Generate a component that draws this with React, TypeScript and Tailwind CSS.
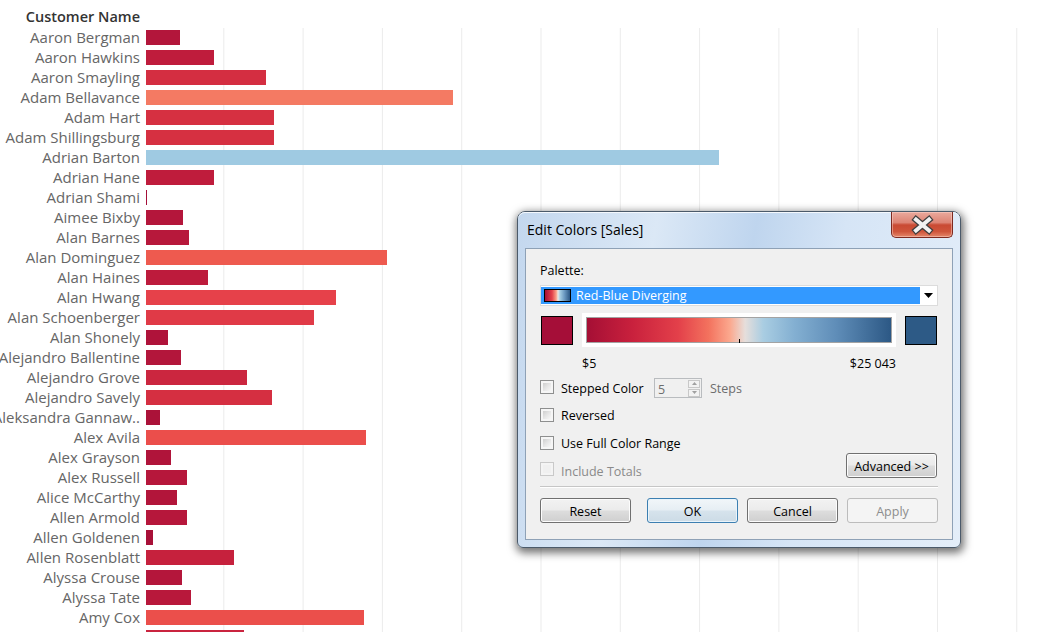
import React from "react";

type Row = [string, number, string];

const rows: Row[] = [
  ["Aaron Bergman", 34, "#b3163b"],
  ["Aaron Hawkins", 68, "#bf1c3c"],
  ["Aaron Smayling", 120, "#d42e41"],
  ["Adam Bellavance", 307, "#f47a63"],
  ["Adam Hart", 128, "#d63041"],
  ["Adam Shillingsburg", 128, "#d63041"],
  ["Adrian Barton", 573, "#9fcae2"],
  ["Adrian Hane", 68, "#bf1c3c"],
  ["Adrian Shami", 1, "#a50f38"],
  ["Aimee Bixby", 37, "#b4163b"],
  ["Alan Barnes", 43, "#b7183b"],
  ["Alan Dominguez", 241, "#ee5a4f"],
  ["Alan Haines", 62, "#bd1b3c"],
  ["Alan Hwang", 190, "#e6414a"],
  ["Alan Schoenberger", 168, "#e03a47"],
  ["Alan Shonely", 22, "#af133a"],
  ["Alejandro Ballentine", 35, "#b3163b"],
  ["Alejandro Grove", 101, "#cb263f"],
  ["Alejandro Savely", 126, "#d52f41"],
  ["Aleksandra Gannaw..", 14, "#ab1239"],
  ["Alex Avila", 220, "#eb4e4b"],
  ["Alex Grayson", 25, "#b0143a"],
  ["Alex Russell", 41, "#b6173b"],
  ["Alice McCarthy", 31, "#b2153a"],
  ["Allen Armold", 41, "#b6173b"],
  ["Allen Goldenen", 7, "#a81038"],
  ["Allen Rosenblatt", 88, "#c6213d"],
  ["Alyssa Crouse", 36, "#b4163b"],
  ["Alyssa Tate", 45, "#b8183b"],
  ["Amy Cox", 218, "#eb4f4b"],
  ["", 98, "#ca243f"],
];

function Checkbox({ disabled }: { disabled?: boolean }) {
  return (
    <div
      className={
        disabled
          ? "w-[14px] h-[14px] shrink-0 border border-[#c9c9c9] bg-[#f4f4f4] p-[2px]"
          : "w-[14px] h-[14px] shrink-0 border border-[#8e8f8f] bg-[#f6f6f6] p-[2px]"
      }
    >
      <div
        className={
          disabled
            ? "w-full h-full bg-[#f0f0f0]"
            : "w-full h-full bg-[linear-gradient(135deg,#cfcfcf_0%,#e6e6e6_50%,#f8f8f8_100%)]"
        }
      />
    </div>
  );
}

function WinButton({
  children,
  variant = "normal",
  className = "",
}: {
  children: React.ReactNode;
  variant?: "normal" | "default" | "disabled";
  className?: string;
}) {
  const base =
    "h-[25px] w-[91px] shrink-0 rounded-[3px] border flex items-center justify-center pt-[3px] text-[12.5px] leading-none";
  const v =
    variant === "default"
      ? "border-[#3c7fb1] text-black bg-[linear-gradient(to_bottom,#f1f6f9_0%,#e6eef4_48%,#d6e3ec_52%,#ccdbe6_100%)] shadow-[inset_0_0_0_1px_#e9f4fb]"
      : variant === "disabled"
      ? "border-[#bcbcbc] text-[#8d8d8d] bg-[#f4f4f4]"
      : "border-[#707070] text-black bg-[linear-gradient(to_bottom,#f2f2f2_0%,#ebebeb_48%,#dddddd_52%,#cfcfcf_100%)] shadow-[inset_0_0_0_1px_#fcfcfc]";
  return <div className={`${base} ${v} ${className}`}>{children}</div>;
}

function Dialog() {
  return (
    <div className="absolute left-[517px] top-[211px] w-[444px] h-[337px] rounded-t-[8px] rounded-b-[6px] border border-[#4b5a6a] bg-[linear-gradient(100deg,#c3d7ee_0%,#dbe8f6_28%,#bfd5ee_48%,#d6e5f6_66%,#e4eef9_100%)] shadow-[1px_3px_9px_2px_rgba(0,0,0,0.55)] flex flex-col font-['Open_Sans','Noto_Sans',sans-serif]">
      <div className="h-[36px] flex shrink-0 rounded-t-[7px] shadow-[inset_0_1px_0_#f4f8fd]">
        <div className="flex-1 flex items-center pl-[9px] pb-[2px] text-[14px] text-black">
          Edit Colors [Sales]
        </div>
        <div className="mr-[7px] w-[62px] h-[26px] rounded-b-[5px] border border-t-0 border-[#7d2a20] bg-[linear-gradient(to_bottom,#eaa99d_0%,#dd8474_42%,#c94a33_52%,#cf553b_78%,#e4876a_100%)] shadow-[inset_0_0_0_1px_rgba(255,220,210,0.45)]">
          <svg width="62" height="26" viewBox="0 0 62 26">
            <path d="M24 7.5 L37 18.5 M37 7.5 L24 18.5" stroke="#3f3f3f" strokeWidth="6.5" strokeLinecap="square" fill="none" />
            <path d="M24 7.5 L37 18.5 M37 7.5 L24 18.5" stroke="#f2f2f2" strokeWidth="4" strokeLinecap="square" fill="none" />
          </svg>
        </div>
      </div>
      <div className="flex-1 mx-[7px] mb-[7px] border border-[#8ea1b6] bg-[#f0f0f0] px-[14px] flex flex-col text-[12.5px] text-black">
        <div className="mt-[14px] h-[16px] leading-[16px]">Palette:</div>
        <div className="mt-[6px] h-[21px] border border-[#dcdcdc] bg-white py-[1px] flex">
          <div className="flex-1 bg-[#3399ff] flex items-center">
            <div className="ml-[3px] w-[27px] h-[13px] border border-black bg-[linear-gradient(to_right,#a50f35_0%,#e3404a_28%,#fba088_45%,#ece6e2_52%,#a5cde3_60%,#6a98c0_78%,#2b5784_100%)]" />
            <div className="ml-[5px] pt-[1px] text-white leading-none">Red-Blue Diverging</div>
          </div>
          <div className="w-[17px] flex items-center justify-center">
            <svg width="9" height="5" viewBox="0 0 9 5">
              <path d="M0 0 H9 L4.5 5 Z" fill="#000" />
            </svg>
          </div>
        </div>
        <div className="mt-[7px] h-[34px] flex">
          <div className="ml-[1px] mt-[3px] w-[32px] h-[29px] border border-black bg-[#a50e38]" />
          <div className="ml-[9px] w-[314px] h-[34px] bg-white p-[4px]">
            <div className="relative w-full h-full border border-[#a3a3a3] bg-[linear-gradient(to_right,#a50f35_0%,#c9213d_15%,#e3404a_30%,#f3725e_40%,#fba88e_47%,#e6dedb_52%,#a9cde2_58%,#84b0d2_68%,#5f8db8_82%,#2c5885_100%)]">
              <div className="absolute left-1/2 bottom-[-1px] w-px h-[4px] bg-black" />
            </div>
          </div>
          <div className="ml-[9px] mt-[3px] w-[32px] h-[29px] border border-black bg-[#2d5a86]" />
        </div>
        <div className="mt-[9px] h-[16px] pl-[42px] leading-[16px]">
          <div className="w-[314px] flex justify-between">
            <span>$5</span>
            <span>$25 043</span>
          </div>
        </div>
        <div className="mt-[6px] h-[20px] flex items-start">
          <div className="mt-[2px]">
            <Checkbox />
          </div>
          <div className="ml-[7px] mt-[3px] w-[93px] leading-[16px]">Stepped Color</div>
          <div className="w-[48px] h-[20px] border border-[#b9bcbf] bg-[#f0f0f0] flex items-center">
            <div className="flex-1 pl-[3px] pt-[3px] leading-[16px] text-[#6d6d6d]">5</div>
            <div className="w-[12px] h-[17px] mr-[1px] flex flex-col gap-[1px]">
              <div className="flex-1 border border-[#c8c8c8] bg-[#f2f2f2] flex items-center justify-center">
                <svg width="5" height="3" viewBox="0 0 5 3"><path d="M0 3 L2.5 0 L5 3 Z" fill="#a0a0a0" /></svg>
              </div>
              <div className="flex-1 border border-[#c8c8c8] bg-[#f2f2f2] flex items-center justify-center">
                <svg width="5" height="3" viewBox="0 0 5 3"><path d="M0 0 L2.5 3 L5 0 Z" fill="#a0a0a0" /></svg>
              </div>
            </div>
          </div>
          <div className="ml-[8px] mt-[3px] leading-[16px] text-[#6d6d6d]">Steps</div>
        </div>
        <div className="mt-[7px] h-[20px] flex items-start">
          <div className="mt-[3px]">
            <Checkbox />
          </div>
          <div className="ml-[7px] mt-[3px] leading-[16px]">Reversed</div>
        </div>
        <div className="mt-[8px] h-[20px] flex items-start">
          <div className="mt-[3px]">
            <Checkbox />
          </div>
          <div className="ml-[7px] mt-[3px] leading-[16px]">Use Full Color Range</div>
        </div>
        <div className="h-[25px] flex items-start justify-between">
          <div className="mt-[9px] flex items-start">
            <Checkbox disabled />
            <div className="ml-[7px] mt-[2px] text-[#8a8a8a] leading-[16px]">Include Totals</div>
          </div>
          <WinButton className="w-[90px] mr-[1px]">Advanced &gt;&gt;</WinButton>
        </div>
        <div className="mt-[8px] h-px bg-[#c6c6c6] shadow-[0_1px_0_#ffffff]" />
        <div className="mt-[11px] flex">
          <WinButton>Reset</WinButton>
          <WinButton variant="default" className="ml-[16px]">OK</WinButton>
          <WinButton className="ml-[9px]">Cancel</WinButton>
          <WinButton variant="disabled" className="ml-[9px]">Apply</WinButton>
        </div>
      </div>
    </div>
  );
}

export default function App() {
  return (
    <div className="relative w-[1048px] h-[632px] overflow-hidden bg-white font-['Open_Sans','Noto_Sans',sans-serif]">
      <div className="h-[28px] w-[146px] pr-[6px] flex justify-end pt-[7px] text-[14.5px] leading-[20px] font-semibold text-[#333333] whitespace-nowrap">
        Customer Name
      </div>
      <div className="flex">
        <div className="w-[146px] shrink-0 flex flex-col">
          {rows.map(([name], i) => (
            <div
              key={i}
              className="h-[20px] pr-[6px] pb-[2px] flex justify-end items-center text-[15px] leading-[18px] text-[#666666] whitespace-nowrap"
            >
              {name}
            </div>
          ))}
        </div>
        <div className="flex-1 flex flex-col bg-[linear-gradient(to_right,transparent_calc(100%-1px),#ebebeb_calc(100%-1px))] bg-[length:79.3px_100%] bg-[position:-1px_0]">
          {rows.map(([, w, c], i) => (
            <div key={i} className="h-[20px] pt-[2px]">
              <div className="h-[15px]" style={{ width: w, backgroundColor: c }} />
            </div>
          ))}
        </div>
      </div>
      <Dialog />
    </div>
  );
}
